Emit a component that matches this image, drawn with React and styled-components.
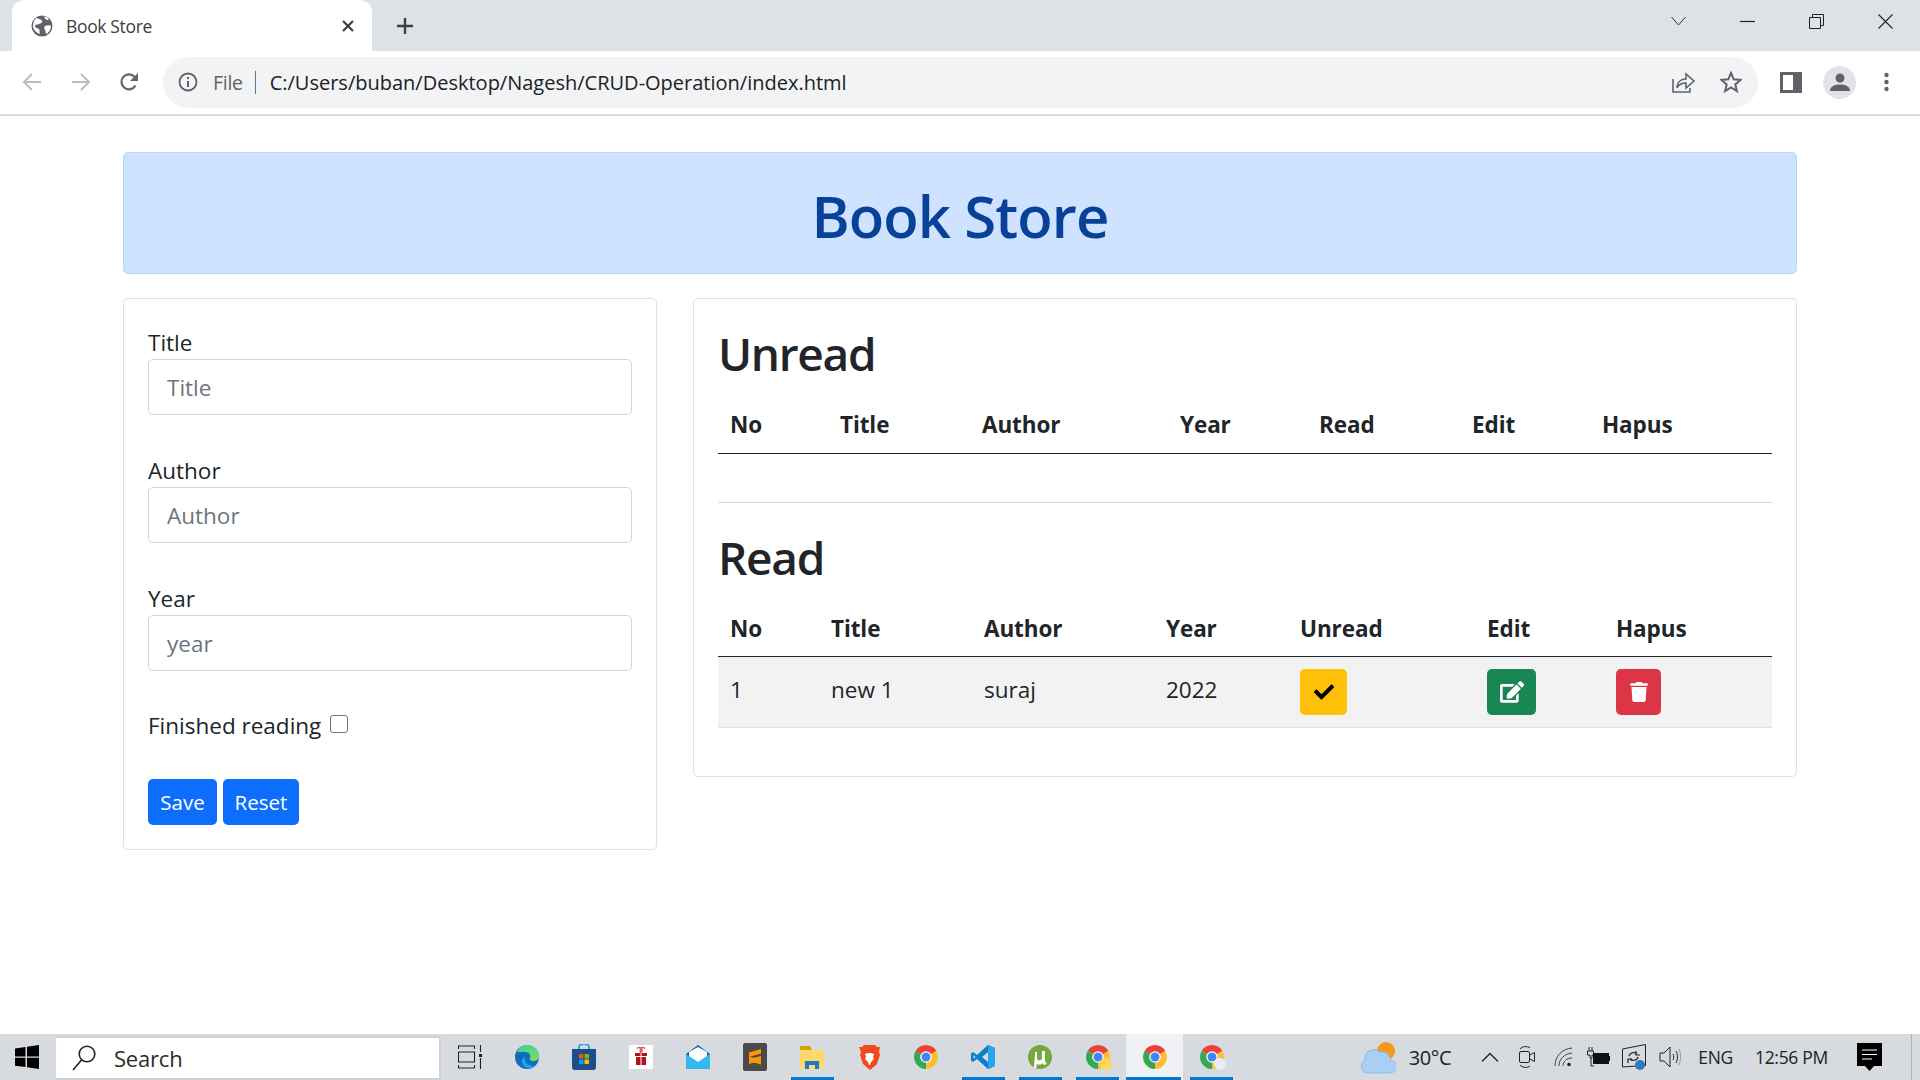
import React from "react";
import styled, { createGlobalStyle } from "styled-components";
import { FaCheck, FaEdit, FaTrash } from "react-icons/fa";

const Global = createGlobalStyle`
  html, body { margin: 0; padding: 0; background: #fff; }
  body { font-family: "Open Sans", "Noto Sans", "Liberation Sans", sans-serif; color: #212529; }
  * { box-sizing: border-box; }
`;

const Screen = styled.div`display:flex;flex-direction:column;width:1920px;height:1080px;overflow:hidden;`;

/* browser chrome */
const TitleBar = styled.div`display:flex;align-items:flex-start;height:51px;background:#dee1e6;flex:none;`;
const Tab = styled.div`display:flex;align-items:center;width:360px;height:51px;margin-left:12px;padding:0 17px 0 19px;background:#fff;border-radius:12px 12px 0 0;`;
const TabTitle = styled.span`flex:1;margin-left:13px;font-size:17.5px;letter-spacing:-.35px;color:#3c4043;`;
const NewTab = styled.div`display:flex;align-items:center;margin:17px 0 0 24px;color:#3c4043;`;
const WindowControls = styled.div`display:flex;align-items:center;gap:54px;margin-left:auto;margin-right:27px;height:42px;`;
const Toolbar = styled.div`display:flex;align-items:center;height:65px;padding:0 0 1px 22px;background:#fff;border-bottom:2px solid #dcdcdc;flex:none;`;
const NavIcons = styled.div`display:flex;align-items:center;gap:28.500px;`;
const Omnibox = styled.div`display:flex;align-items:center;width:1595px;height:51px;margin-left:24px;padding:0 16px 0 15px;background:#f1f3f4;border-radius:26px;`;
const FileLabel = styled.span`margin-left:15px;font-size:19.5px;letter-spacing:-.3px;color:#5f6368;`;
const Separator = styled.span`width:1px;height:23px;margin:0 14px 0 12px;background:#70757a;`;
const Url = styled.span`flex:1;font-size:20px;color:#202124;white-space:nowrap;`;
const OmniActions = styled.div`display:flex;align-items:center;gap:25px;`;
const ToolbarActions = styled.div`display:flex;align-items:center;margin-left:22px;`;
const Avatar = styled.div`display:flex;align-items:center;justify-content:center;width:33px;height:33px;margin:0 28px 0 21px;border-radius:50%;background:#e1e3e9;overflow:hidden;`;

/* page */
const Page = styled.main`flex:1;padding:36px 123px 0 123px;`;
const Banner = styled.header`height:122px;margin-bottom:24px;border:1px solid #b6d4fe;border-radius:5px;background:#cfe2ff;display:flex;align-items:center;justify-content:center;`;
const BannerTitle = styled.h1`margin:5px 0 0;font-size:58px;font-weight:600;line-height:1.2;letter-spacing:-.9px;color:#084298;`;
const Columns = styled.div`display:flex;align-items:flex-start;gap:36px;`;
const Card = styled.section`flex:${p => p.$grow ? "1" : "none"};width:${p => p.$grow ? "auto" : "534px"};padding:24px;border:1px solid #dfe0e2;border-radius:5px;background:#fff;`;
const Group = styled.div`margin-bottom:36px;`;
const Label = styled.label`display:block;height:36px;font-size:22.5px;line-height:40px;`;
const Input = styled.input`display:block;width:100%;height:56px;padding:0 18px;border:1px solid #ced4da;border-radius:5px;font:22.5px "Open Sans",sans-serif;color:#212529;&::placeholder{color:#6c757d;opacity:1;}`;
const CheckRow = styled.div`display:flex;align-items:center;height:36px;margin-bottom:36px;font-size:22.5px;`;
const Check = styled.input.attrs({ type: "checkbox" })`appearance:none;width:18px;height:18px;margin:0 0 2px 9px;border:1.5px solid #767676;border-radius:3px;background:#fff;`;
const Actions = styled.div`display:flex;gap:6px;`;
const Btn = styled.button`display:flex;align-items:center;justify-content:center;height:46px;width:${p => p.$w}px;padding:0;border:0;border-radius:5px;background:${p => p.$bg};color:${p => p.$fg || "#fff"};font:20.5px "Open Sans",sans-serif;`;
const Heading = styled.h2`margin:0 0 18px;font-size:46px;font-weight:600;line-height:56px;letter-spacing:-1.3px;position:relative;top:2px;`;
const Table = styled.table`width:100%;table-layout:fixed;border-collapse:collapse;margin-bottom:24px;font-size:22.5px;`;
const Col = styled.col`width:${p => p.$w}px;`;
const Th = styled.th`height:56px;padding:0 12px;border-bottom:1px solid #212529;text-align:left;font-weight:700;letter-spacing:-.1px;`;
const Row = styled.tr`background:#f2f2f2;border-bottom:1px solid #dee2e6;`;
const Td = styled.td`height:70px;padding:12px;vertical-align:top;line-height:42px;`;
const Rule = styled.hr`margin:48px 0 24px;border:0;border-top:1px solid #d4d5d6;`;

/* taskbar */
const Taskbar = styled.footer`display:flex;align-items:center;height:46px;flex:none;background:#d7dade;`;
const StartSlot = styled.div`display:flex;align-items:center;width:56px;padding-left:15px;`;
const SearchBox = styled.div`display:flex;align-items:center;width:385px;height:44px;margin-top:2px;padding-left:16px;background:#fff;border:2px solid #cfd1d4;border-left:0;`;
const SearchText = styled.span`margin-left:18px;font-size:22px;letter-spacing:-.2px;color:#2b2b2b;`;
const Apps = styled.div`display:flex;`;
const Slot = styled.div`display:flex;align-items:center;justify-content:center;position:relative;width:57.100px;height:46px;background:${p => p.$active ? "#f0f1f4" : "transparent"};
  &::after{content:"";display:${p => p.$run ? "block" : "none"};position:absolute;bottom:0;height:3px;left:${p => p.$active ? "0" : "7px"};right:${p => p.$active ? "2px" : "7px"};background:#0078d4;}`;
const Tray = styled.div`display:flex;align-items:center;margin-left:auto;height:46px;position:relative;padding-right:8px;`;
const Temp = styled.span`margin:0 30px 0 13px;font-size:20px;letter-spacing:-.4px;color:#222;`;
const TrayIcons = styled.div`display:flex;align-items:center;`;
const TrayIcon = styled.div`margin-left:${p => p.$ml}px;`;
const TrayText = styled.span`font-size:17.5px;letter-spacing:-.3px;color:#222;margin-left:${p => p.$ml}px;`;
const NotifSlot = styled.div`margin-left:29px;`;
const Divider = styled.div`width:1px;height:46px;margin-left:29px;background:#aeb0b3;`;

const Ico = styled.svg`display:block;flex:none;`;

const Globe = () => (
  <Ico width="22" height="22" viewBox="0 0 22 22"><circle cx="11" cy="11" r="10.5" fill="#5f6368"/><path d="M5 3c3 1 5 1 6 3s-2 2-3 3-4 0-4 2 3 2 4 3 0 3 1 5c-3-1-7-4-7-8 0-3 1-6 3-8zM14 11c2-1 5-1 6 0 0 3-2 6-4 8-2-1-1-3-2-4s-1-3 0-4zM13 1.500c2 0 4 1 5 3-2 1-3 0-4-1z" fill="#fff"/></Ico>
);
const Plus = () => <Ico width="18" height="18" viewBox="0 0 18 18"><path d="M9 1v16M1 9h16" stroke="#3c4043" strokeWidth="2.4"/></Ico>;
const TabClose = () => <Ico width="14" height="14" viewBox="0 0 14 14"><path d="M2 2l10 10M12 2L2 12" stroke="#3c4043" strokeWidth="2.2"/></Ico>;
const Chevron = () => <Ico width="15" height="10" viewBox="0 0 15 10"><path d="M.5 1l7 8 7-8" fill="none" stroke="#333" strokeWidth="1"/></Ico>;
const Minimize = () => <Ico width="15" height="15" viewBox="0 0 15 15"><path d="M0 7.500h15" stroke="#222" strokeWidth="1.2"/></Ico>;
const Restore = () => <Ico width="15" height="15" viewBox="0 0 15 15"><path d="M.5 3.500h11v11H.5zM3.500 3.500v-3h11v11h-3" fill="none" stroke="#222" strokeWidth="1"/></Ico>;
const CloseWin = () => <Ico width="15" height="15" viewBox="0 0 15 15"><path d="M.5.500l14 14M14.500.500l-14 14" stroke="#222" strokeWidth="1.1"/></Ico>;
const Back = ({ c }) => <Ico width="20" height="20" viewBox="0 0 20 20"><path d="M19 10H2M10 2l-8 8 8 8" fill="none" stroke={c} strokeWidth="2"/></Ico>;
const Forward = ({ c }) => <Ico width="20" height="20" viewBox="0 0 20 20"><path d="M1 10h17M10 2l8 8-8 8" fill="none" stroke={c} strokeWidth="2"/></Ico>;
const Reload = () => <Ico width="20" height="20" viewBox="0 0 20 20"><path d="M16.500 13.500A7.500 7.500 0 1 1 15.500 4.800" fill="none" stroke="#5f6368" strokeWidth="2.2"/><path d="M19 1v8h-8z" fill="#5f6368"/></Ico>;
const InfoIcon = () => <Ico width="20" height="20" viewBox="0 0 20 20"><circle cx="10" cy="10" r="8.500" fill="none" stroke="#5f6368" strokeWidth="1.8"/><path d="M10 9v6M10 5v2" stroke="#5f6368" strokeWidth="2"/></Ico>;
const Share = () => <Ico width="23" height="22" viewBox="0 0 23 22"><path d="M1 8v13h17v-4" fill="none" stroke="#5f6368" strokeWidth="1.600"/><path d="M5 17c0-6 4-9 9-9V3l8 7-8 7v-5c-4 0-7 1-9 5z" fill="none" stroke="#5f6368" strokeWidth="1.600"/></Ico>;
const Star = () => <Ico width="22" height="22" viewBox="0 0 22 22"><path d="M11 2l2.700 6.300 6.800.6-5.200 4.500 1.600 6.700L11 16.500l-5.900 3.600 1.600-6.700L1.500 8.900l6.800-.6z" fill="none" stroke="#5f6368" strokeWidth="2"/></Ico>;
const SidePanel = () => <Ico width="22" height="21" viewBox="0 0 22 21"><rect width="22" height="21" fill="#5f6368"/><rect x="3" y="3" width="10" height="15" fill="#fff"/></Ico>;
const Person = () => <Ico width="20" height="20" viewBox="0 0 20 20"><circle cx="10" cy="6" r="4.500" fill="#5f6368"/><path d="M0 19c0-5 5-6.500 10-6.500S20 14 20 19z" fill="#5f6368"/></Ico>;
const Dots = () => <Ico width="5" height="20" viewBox="0 0 5 20"><circle cx="2.500" cy="3" r="2.200" fill="#5f6368"/><circle cx="2.500" cy="10" r="2.200" fill="#5f6368"/><circle cx="2.500" cy="17" r="2.200" fill="#5f6368"/></Ico>;

const WinLogo = () => <Ico width="24" height="24" viewBox="0 0 24 24"><path d="M0 3.400l10.500-1.400v9.400H0zM12 1.800L24 0v11.400H12zM0 12.800h10.500v9.300L0 20.700zM12 12.800h12V24l-12-1.700z" fill="#000"/></Ico>;
const Magnifier = () => <Ico width="24" height="26" viewBox="0 0 24 26"><circle cx="15" cy="9" r="7.800" fill="none" stroke="#222" strokeWidth="1.600"/><path d="M9.500 15L1 25" stroke="#222" strokeWidth="1.600"/></Ico>;
const TaskView = () => <Ico width="24" height="24" viewBox="0 0 24 24"><path d="M.5 4V1h16v3M.5 20v3h16v-3M.5 7h16v10H.5zM22.500 0v7M22.500 13v11" fill="none" stroke="#222" strokeWidth="1.100"/><rect x="21" y="9" width="3" height="3" fill="#222"/></Ico>;
const Edge = () => <Ico width="24" height="24" viewBox="0 0 24 24"><defs><linearGradient id="e1" x1="0" y1="0" x2="1" y2="1"><stop offset="0" stopColor="#3ad1a0"/><stop offset="1" stopColor="#7be05c"/></linearGradient></defs><circle cx="12" cy="12" r="12" fill="#0f6cc0"/><path d="M2 7C4 2 8 0 12 0c7 0 12 5 12 11 0 4-3 5-6 5-2 0-4-1-3-3 1-3-1-6-5-6-3 0-6 0-8 0z" fill="url(#e1)"/><path d="M10 12c-1 5 3 9 8 9 1 0 2 0 3-1-3 4-9 4-12 1-3-3-3-7 1-9z" fill="#1ea6e8"/></Ico>;
const StoreIcon = () => <Ico width="24" height="26" viewBox="0 0 24 26"><path d="M7 5V3a5 3 0 0 1 10 0v2" fill="none" stroke="#28a8ea" strokeWidth="2"/><path d="M0 5h24v18a3 3 0 0 1-3 3H3a3 3 0 0 1-3-3z" fill="#1c4f8a"/><rect x="7" y="10" width="4.500" height="4.500" fill="#f25022"/><rect x="12.500" y="10" width="4.500" height="4.500" fill="#7fba00"/><rect x="7" y="15.500" width="4.500" height="4.500" fill="#00a4ef"/><rect x="12.500" y="15.500" width="4.500" height="4.500" fill="#ffb900"/></Ico>;
const Gift = () => <Ico width="24" height="24" viewBox="0 0 24 24"><rect width="24" height="24" fill="#fff"/><path d="M6 8h5.500v3H6zM12.500 8H18v3h-5.500zM7 12h4.500v8H7zM12.500 12H17v8h-4.500z" fill="#b3121d"/><path d="M8 3.500a2 2 0 0 1 4 4 2 2 0 0 1 4-4" fill="none" stroke="#e25b62" strokeWidth="1.600"/></Ico>;
const Mail = () => <Ico width="24" height="24" viewBox="0 0 24 24"><path d="M12 0l12 9v15H0V9z" fill="#0f5fa8"/><path d="M3 7l9-5 9 5v6l-9 5-9-5z" fill="#fff"/><path d="M0 9l12 8 12-8v15H0z" fill="#35b8f2"/></Ico>;
const Sublime = () => <Ico width="24" height="28" viewBox="0 0 24 28"><rect width="24" height="28" rx="2" fill="#4a4a4a"/><path d="M6 9.500L18 6v4.500L6 14zM6 13.500l12 3.500v4.500L6 18zM6 16l12-3v4.500L6 21z" fill="#ff9800"/></Ico>;
const Folder = () => <Ico width="24" height="24" viewBox="0 0 24 24"><path d="M0 1h10l2 4H0z" fill="#d9a300"/><path d="M0 5h24v19H0z" fill="#ffd86b"/><path d="M5 24v-8h14v8h-4v-4H9v4z" fill="#1b78c6"/></Ico>;
const Brave = () => <Ico width="21" height="25" viewBox="0 0 21 25"><path d="M5 0h11l2 2 3 0-1 5 1 3-3 9-7 6-7-6L1 10l1-3L0 2h3z" fill="#f4481f"/><path d="M6 9l3-1h3l3 1-1 3 1 2-3 3-1 3h-1l-1-3-3-3 1-2z" fill="#fff"/></Ico>;
const Chrome = ({ size = 24 }) => (
  <Ico width={size} height={size} viewBox="0 0 24 24">
    <path d="M12 12L1.610 6A12 12 0 0 1 22.390 6z" fill="#ea4335"/>
    <path d="M12 12L22.390 6A12 12 0 0 1 12 24z" fill="#fbc02d"/>
    <path d="M12 12L12 24A12 12 0 0 1 1.610 6z" fill="#34a853"/>
    <circle cx="12" cy="12" r="5.800" fill="#fff"/><circle cx="12" cy="12" r="4.500" fill="#4285f4"/>
  </Ico>
);
const Badge = styled.span`position:absolute;right:${p => p.$r}px;bottom:${p => p.$b}px;width:12px;height:12px;border-radius:50%;background:${p => p.$c};`;
const Vscode = () => <Ico width="24" height="24" viewBox="0 0 24 24"><path d="M17 0l7 3v18l-7 3-11-10-4 3-2-1.500V8.500L2 7l4 3z" fill="#0a7fc7"/><path d="M17 0l7 3v18l-7 3z" fill="#2aa4ea"/><path d="M17 7l-6 5 6 5z" fill="#d7dade"/><path d="M2.500 10l2 2-2 2z" fill="#d7dade"/></Ico>;
const Torrent = () => <Ico width="24" height="24" viewBox="0 0 24 24"><circle cx="12" cy="12" r="12" fill="#76a83e"/><path d="M7 7l2 0v6c0 3 3 3 5 1V6h3v10c0 1 1 2 2 2l-2 2c-1 0-2-1-2-2-2 2-4 2-6 1l-1 4H6z" fill="#fff"/></Ico>;

const Cloud = () => <Ico width="36" height="34" viewBox="0 0 36 34"><circle cx="26" cy="11" r="9" fill="#f39a1e"/><path d="M7 33a7 7 0 0 1-2-13 9 9 0 0 1 15-8 8 8 0 0 1 10 8 6.500 6.500 0 0 1 0 13z" fill="#a9cff5" stroke="#7fb4e8" strokeWidth=".8"/></Ico>;
const Caret = () => <Ico width="18" height="10" viewBox="0 0 18 10"><path d="M1 9.500l8-8 8 8" fill="none" stroke="#222" strokeWidth="1.300"/></Ico>;
const Meet = () => <Ico width="16" height="24" viewBox="0 0 16 24"><path d="M1 4C3 1 9 1 11 3M1 20c2 3 8 3 10 1" fill="none" stroke="#222"/><rect x=".5" y="6.500" width="10" height="11" rx="1.500" fill="none" stroke="#222"/><path d="M11 10l4.500-2.500v9L11 14" fill="none" stroke="#222"/></Ico>;
const Wifi = () => <Ico width="18" height="20" viewBox="0 0 18 20"><path d="M1 19C1 9 8 2 18 1M5 19c0-7 5-12 13-13M9 19c0-4 3-8 9-8" fill="none" stroke="#444"/><circle cx="15" cy="17.500" r="1.800" fill="#222"/></Ico>;
const Battery = () => <Ico width="24" height="22" viewBox="0 0 24 22"><path d="M3 1v4M6 1v4M1.500 5h6v4h-1.500v3h-2V9H1.500zM5 12v8h3" fill="none" stroke="#222"/><rect x="7" y="7" width="16" height="11" fill="#111"/><rect x="23" y="10" width="1" height="5" fill="#111"/></Ico>;
const Update = () => <Ico width="24" height="26" viewBox="0 0 24 26"><path d="M.5 5L23.500.5v21L.5 23z" fill="none" stroke="#222"/><path d="M7 12c1-4 6-4 8-2M16 13c-1 4-6 4-8 2M14 7v4h4M6 19v-4h4" fill="none" stroke="#222" strokeWidth="1.200"/><circle cx="18" cy="21" r="5" fill="#2f78c4"/></Ico>;
const Speaker = () => <Ico width="22" height="22" viewBox="0 0 22 22"><path d="M1 7h4l6-6v20l-6-6H1z" fill="none" stroke="#222"/><path d="M14 8c1 2 1 4 0 6M17 5c2 4 2 8 0 12" fill="none" stroke="#222"/><path d="M20 3c2 5 2 11 0 16" fill="none" stroke="#999"/></Ico>;
const Notif = () => <Ico width="25" height="28" viewBox="0 0 25 28"><path d="M0 0h25v23h-8l-4.500 5-4.500-5H0z" fill="#000"/><path d="M5 7h15M5 11.500h15M5 16h10" stroke="#fff" strokeWidth="1.200"/></Ico>;

const formFields = [["Title", "Title"], ["Author", "Author"], ["Year", "year"]];
const unreadCols = [110, 142, 198, 139, 153, 130, 182];
const readCols = [101, 153, 182, 134, 187, 129, 168];
const unreadHead = ["No", "Title", "Author", "Year", "Read", "Edit", "Hapus"];
const readHead = ["No", "Title", "Author", "Year", "Unread", "Edit", "Hapus"];

const BookTable = ({ cols, head, children }) => (
  <Table>
    <colgroup>{cols.map((w, i) => <Col key={i} $w={w} />)}</colgroup>
    <thead><tr>{head.map(h => <Th key={h}>{h}</Th>)}</tr></thead>
    <tbody>{children}</tbody>
  </Table>
);

export default function App() {
  return (
    <Screen>
      <Global />
      <TitleBar>
        <Tab>
          <Globe />
          <TabTitle>Book Store</TabTitle>
          <TabClose />
        </Tab>
        <NewTab><Plus /></NewTab>
        <WindowControls><Chevron /><Minimize /><Restore /><CloseWin /></WindowControls>
      </TitleBar>
      <Toolbar>
        <NavIcons><Back c="#babcbe" /><Forward c="#babcbe" /><Reload /></NavIcons>
        <Omnibox>
          <InfoIcon />
          <FileLabel>File</FileLabel>
          <Separator />
          <Url>C:/Users/buban/Desktop/Nagesh/CRUD-Operation/index.html</Url>
          <OmniActions><Share /><Star /></OmniActions>
        </Omnibox>
        <ToolbarActions><SidePanel /><Avatar><Person /></Avatar><Dots /></ToolbarActions>
      </Toolbar>
      <Page>
        <Banner><BannerTitle>Book Store</BannerTitle></Banner>
        <Columns>
          <Card>
            {formFields.map(([l, p]) => (
              <Group key={l}><Label>{l}</Label><Input placeholder={p} /></Group>
            ))}
            <CheckRow>Finished reading<Check /></CheckRow>
            <Actions>
              <Btn $w={69} $bg="#0d6efd">Save</Btn>
              <Btn $w={76} $bg="#0d6efd">Reset</Btn>
            </Actions>
          </Card>
          <Card $grow>
            <Heading>Unread</Heading>
            <BookTable cols={unreadCols} head={unreadHead} />
            <Rule />
            <Heading>Read</Heading>
            <BookTable cols={readCols} head={readHead}>
              <Row>
                <Td>1</Td><Td>new 1</Td><Td>suraj</Td><Td>2022</Td>
                <Td><Btn $w={47} $bg="#ffc107" $fg="#000"><FaCheck size={20} /></Btn></Td>
                <Td><Btn $w={49} $bg="#198754"><FaEdit size={24} /></Btn></Td>
                <Td><Btn $w={45} $bg="#dc3545"><FaTrash size={20} /></Btn></Td>
              </Row>
            </BookTable>
          </Card>
        </Columns>
      </Page>
      <Taskbar>
        <StartSlot><WinLogo /></StartSlot>
        <SearchBox><Magnifier /><SearchText>Search</SearchText></SearchBox>
        <Apps>
          <Slot><TaskView /></Slot>
          <Slot><Edge /></Slot>
          <Slot><StoreIcon /></Slot>
          <Slot><Gift /></Slot>
          <Slot><Mail /></Slot>
          <Slot><Sublime /></Slot>
          <Slot $run><Folder /></Slot>
          <Slot><Brave /></Slot>
          <Slot><Chrome /></Slot>
          <Slot $run><Vscode /></Slot>
          <Slot $run><Torrent /></Slot>
          <Slot $run><Chrome /><Badge $r={14} $b={10} $c="#fbd75b" /></Slot>
          <Slot $run $active><Chrome /></Slot>
          <Slot $run><Chrome /><Badge $r={14} $b={10} $c="#ecebfa" /></Slot>
        </Apps>
        <Tray>
          <Cloud />
          <Temp>30°C</Temp>
          <TrayIcons>
            <Caret />
            <TrayIcon $ml={20}><Meet /></TrayIcon>
            <TrayIcon $ml={19}><Wifi /></TrayIcon>
            <TrayIcon $ml={14}><Battery /></TrayIcon>
            <TrayIcon $ml={12}><Update /></TrayIcon>
            <TrayIcon $ml={13}><Speaker /></TrayIcon>
          </TrayIcons>
          <TrayText $ml={17}>ENG</TrayText>
          <TrayText $ml={22}>12:56 PM</TrayText>
          <NotifSlot><Notif /></NotifSlot>
          <Divider />
        </Tray>
      </Taskbar>
    </Screen>
  );
}
